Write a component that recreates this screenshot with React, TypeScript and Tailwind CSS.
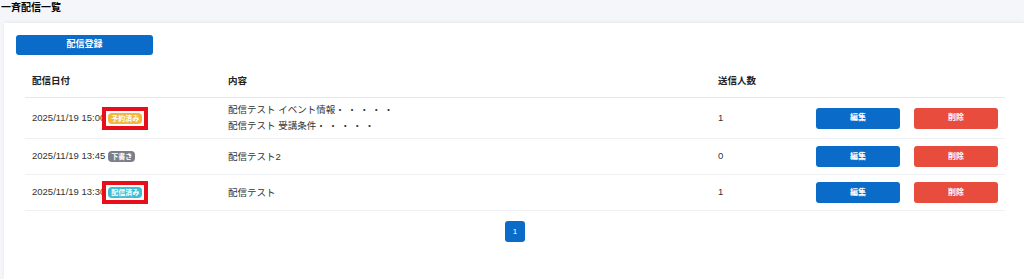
const rows = [
  {
    date: '2025/11/19 15:00',
    status: '予約済み',
    badge: 'bg-[#f3b73a]',
    marked: true,
    lines: ['配信テスト イベント情報・ ・ ・ ・ ・', '配信テスト 受講条件・ ・ ・ ・ ・'],
    count: 1,
  },
  {
    date: '2025/11/19 13:45',
    status: '下書き',
    badge: 'bg-[#7b7f8c]',
    marked: false,
    lines: ['配信テスト2'],
    count: 0,
  },
  {
    date: '2025/11/19 13:30',
    status: '配信済み',
    badge: 'bg-[#3cbfd4]',
    marked: true,
    lines: ['配信テスト'],
    count: 1,
  },
];

function StatusBadge({ label, color, marked }: { label: string; color: string; marked: boolean }) {
  return (
    <span className="relative ml-[3px] inline-flex">
      <span
        className={`inline-flex h-[11px] items-center rounded-[4px] px-[3px] font-['Noto_Sans_CJK_JP',sans-serif] text-[7px] font-bold leading-none text-white ${color}`}
      >
        {label}
      </span>
      {marked && (
        <span className="absolute -top-[6px] -right-[6px] -bottom-[6px] -left-[6px] border-4 border-[#e60f1a]"></span>
      )}
    </span>
  );
}

export default function App() {
  return (
    <div className="min-h-[279px] bg-[#f5f6fa] font-['Liberation_Sans','Noto_Sans_CJK_JP',sans-serif] text-[#333]">
      <h1 className="h-[23px] pt-[2px] pl-[1px] text-[10px] font-bold leading-[12px] text-black">一斉配信一覧</h1>
      <div className="ml-1 min-h-[256px] bg-white pt-3 shadow-[0_-1px_4px_rgba(0,0,0,0.06)]">
        <button className="ml-3 block h-5 w-[137px] rounded-[3px] bg-[#0a6bc8] text-[9px] font-bold text-white">
          配信登録
        </button>
        <div className="mt-[10px] pr-[19px] pl-[21px]">
          <div className="grid h-[33px] grid-cols-[196px_490px_1fr] items-center border-b border-[#e6e8ef] text-[9.5px] font-bold text-[#222]">
            <div className="pl-[7px]">配信日付</div>
            <div className="pl-[7px]">内容</div>
            <div className="pl-[7px]">送信人数</div>
          </div>
          {rows.map((row) => (
            <div
              key={row.date}
              className={`grid grid-cols-[196px_490px_97px_1fr] items-center border-b border-[#eef0f3] text-[9.5px] ${
                row.lines.length > 1 ? 'py-[4px]' : 'py-[7px]'
              }`}
            >
              <div className="flex items-center pl-[7px]">
                <span>{row.date}</span>
                <StatusBadge label={row.status} color={row.badge} marked={row.marked} />
              </div>
              <div className="pl-[7px] leading-[16px]">
                {row.lines.map((l) => (
                  <div key={l}>{l}</div>
                ))}
              </div>
              <div className="pl-[7px]">{row.count}</div>
              <div className="flex justify-end gap-[14px] pr-[7px]">
                <button className="h-[21px] w-[84px] rounded-[3px] bg-[#0a6bc8] text-[8px] font-bold text-white">
                  編集
                </button>
                <button className="h-[21px] w-[84px] rounded-[3px] bg-[#e84c3d] text-[8px] font-bold text-white">
                  削除
                </button>
              </div>
            </div>
          ))}
          <div className="mt-[10px] flex justify-center">
            <span className="flex h-[21px] w-5 items-center justify-center rounded-[3px] bg-[#0a6bc8] text-[8px] text-white">
              1
            </span>
          </div>
        </div>
      </div>
    </div>
  );
}
